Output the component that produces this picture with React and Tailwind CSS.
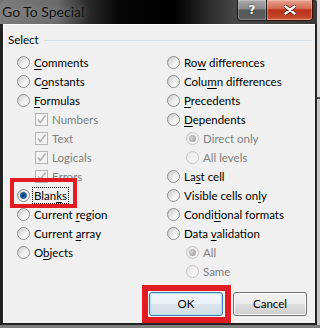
import React from "react";

const leftItems = [
  { type: "radio", label: "Comments", key: 0 },
  { type: "radio", label: "Constants", key: 1 },
  { type: "radio", label: "Formulas", key: 0 },
  { type: "check", label: "Numbers" },
  { type: "check", label: "Text" },
  { type: "check", label: "Logicals" },
  { type: "check", label: "Errors" },
  { type: "radio", label: "Blanks", key: 4, checked: true, focus: true },
  { type: "radio", label: "Current region", key: 8 },
  { type: "radio", label: "Current array", key: 8 },
  { type: "radio", label: "Objects", key: 1 },
];

const rightItems = [
  { type: "radio", label: "Row differences", key: 2 },
  { type: "radio", label: "Column differences", key: 4 },
  { type: "radio", label: "Precedents", key: 0 },
  { type: "radio", label: "Dependents", key: 0 },
  { type: "sub", label: "Direct only", checked: true },
  { type: "sub", label: "All levels" },
  { type: "radio", label: "Last cell", key: 2 },
  { type: "radio", label: "Visible cells only", key: 16 },
  { type: "radio", label: "Conditional formats", key: 5 },
  { type: "radio", label: "Data validation", key: 5 },
  { type: "sub", label: "All", checked: true },
  { type: "sub", label: "Same" },
];

const Radio = ({ checked, disabled }) => (
  <span
    className={`flex h-[13px] w-[13px] shrink-0 items-center justify-center rounded-full border ${
      disabled
        ? "border-[#c5c5c5] bg-[linear-gradient(135deg,#e6e6e6,#fbfbfb)]"
        : "border-[#8e8f8f] bg-[linear-gradient(135deg,#c9c9c9,#f2f2f2_60%,#ffffff)]"
    }`}
  >
    {checked && (
      <span
        className={`h-[7px] w-[7px] rounded-full ${
          disabled
            ? "bg-[radial-gradient(circle_at_40%_40%,#d6d6d6,#a3a3a3_75%)]"
            : "bg-[radial-gradient(circle_at_45%_45%,#0d3a6c,#1f5f9f_55%,#8dcbf3)]"
        }`}
      />
    )}
  </span>
);

const Check = () => (
  <span className="flex h-[13px] w-[13px] shrink-0 items-center justify-center border border-[#b4b4b4] bg-[#f4f4f4]">
    <svg width="11" height="11" viewBox="0 0 11 11">
      <path d="M2 5.5 L4.3 8.5 L9.5 1.5" fill="none" stroke="#b0b0b0" strokeWidth="1.5" />
    </svg>
  </span>
);

const Label = ({ text, k }) => {
  if (k === undefined) return text;
  return (
    <>
      {text.slice(0, k)}
      <span className="underline decoration-1 underline-offset-[2px]">{text[k]}</span>
      {text.slice(k + 1)}
    </>
  );
};

const Row = ({ item }) => {
  if (item.type === "check") {
    return (
      <div className="flex h-[19px] items-center gap-[4px] pl-[18px] text-[#808080]">
        <Check />
        <span>{item.label}</span>
      </div>
    );
  }
  if (item.type === "sub") {
    return (
      <div className="flex h-[19px] items-center gap-[4px] pl-[19px] text-[#808080]">
        <Radio checked={item.checked} disabled />
        <span>{item.label}</span>
      </div>
    );
  }
  return (
    <div className="flex h-[19px] items-center gap-[4px] text-black">
      <Radio checked={item.checked} />
      <span className={item.focus ? "-ml-[2px] border border-dotted border-black px-[1px] leading-[15px]" : ""}>
        <Label text={item.label} k={item.key} />
      </span>
    </div>
  );
};

const App = () => {
  return (
    <div className="flex h-[328px] w-[320px] overflow-hidden bg-[#7d7d7d] font-['Lato',sans-serif] text-[11.5px]">
      <div className="flex h-[325px] w-[317px] flex-col rounded-t-[4px] bg-[#232323]">
        <div className="flex h-[24px] shrink-0 items-start justify-between rounded-t-[4px] bg-[linear-gradient(90deg,#7c7c7c_0%,#6a6a6a_18%,#2a2a2a_28%,#050505_38%,#000_55%,#2c2c2c_66%,#474747_74%,#3a3a3a_100%)]">
          <span className="pl-[2px] pt-[4px] text-[14px] leading-[16px] text-[#111] [text-shadow:0_0_6px_rgba(255,255,255,0.35)]">
            Go To Special
          </span>
          <div className="mr-[4px] flex h-[21px]">
            <div className="flex w-[30px] items-center justify-center rounded-bl-[4px] border border-t-0 border-[#1c1c1c] bg-[linear-gradient(180deg,#a9a9a9_0%,#8a8a8a_45%,#565656_50%,#5e5e5e_100%)] shadow-[inset_0_0_0_1px_rgba(255,255,255,0.25)]">
              <span className="font-['DejaVu_Sans',sans-serif] text-[12px] font-bold leading-none text-white [text-shadow:0_0_2px_#222]">
                ?
              </span>
            </div>
            <div className="flex w-[46px] items-center justify-center rounded-br-[4px] border border-l-0 border-t-0 border-[#3a0d06] bg-[linear-gradient(180deg,#e7a393_0%,#d66a52_42%,#bb3219_50%,#c2452a_85%,#d46a48_100%)] shadow-[inset_0_0_0_1px_rgba(255,220,210,0.35)]">
              <svg width="12" height="10" viewBox="0 0 12 10">
                <path d="M1.5 1.5 L10.5 8.5 M10.5 1.5 L1.5 8.5" stroke="#5a1608" strokeWidth="4" strokeLinecap="round" />
                <path d="M1.5 1.5 L10.5 8.5 M10.5 1.5 L1.5 8.5" stroke="#fff" strokeWidth="2.4" strokeLinecap="round" />
              </svg>
            </div>
          </div>
        </div>

        <div className="relative mb-[2px] ml-[3px] mr-[2px] flex-1 overflow-hidden bg-[#f0f0f0] shadow-[inset_1px_1px_0_#ffffff]">
          <div className="mt-[8px] flex h-[16px] items-center pl-[5px]">
            <span className="text-black">Select</span>
            <div className="ml-[5px] mr-[3px] h-px flex-1 bg-[#d5dfe5]" />
          </div>

          <div className="mt-[5px] grid grid-cols-[150px_1fr] pl-[14px]">
            <div>
              {leftItems.map((item) => (
                <Row key={item.label} item={item} />
              ))}
            </div>
            <div>
              {rightItems.map((item) => (
                <Row key={item.label} item={item} />
              ))}
            </div>
          </div>

          <div className="mt-[11px] flex justify-end gap-[10px] pr-[8px]">
            <button className="flex h-[24px] w-[74px] items-center justify-center rounded-[3px] border border-[#3c7fb1] bg-[linear-gradient(180deg,#f3f7fa_0%,#eaf0f5_48%,#dbe4ec_52%,#d2dde6_100%)] text-black shadow-[inset_0_0_0_1px_#aee0f7]">
              OK
            </button>
            <button className="flex h-[24px] w-[74px] items-center justify-center rounded-[3px] border border-[#707070] bg-[linear-gradient(180deg,#f2f2f2_0%,#ebebeb_48%,#dddddd_52%,#cfcfcf_100%)] text-black shadow-[inset_0_0_0_1px_#fcfcfc]">
              Cancel
            </button>
          </div>

          <div className="pointer-events-none absolute left-[7px] top-[154px] h-[30px] w-[67px] border-[4px] border-[#e31b23]" />
          <div className="pointer-events-none absolute left-[139px] top-[261px] h-[38px] w-[89px] border-[6px] border-[#e31b23]" />
        </div>
      </div>

      <div className="flex h-[325px] w-[3px] flex-col">
        <div className="h-[97px] bg-[#dcdcdc]" />
        <div className="h-[2px] bg-[#4a4a4a]" />
        <div className="flex-1 bg-[#c6c6c6]" />
      </div>
    </div>
  );
};

export default App;
